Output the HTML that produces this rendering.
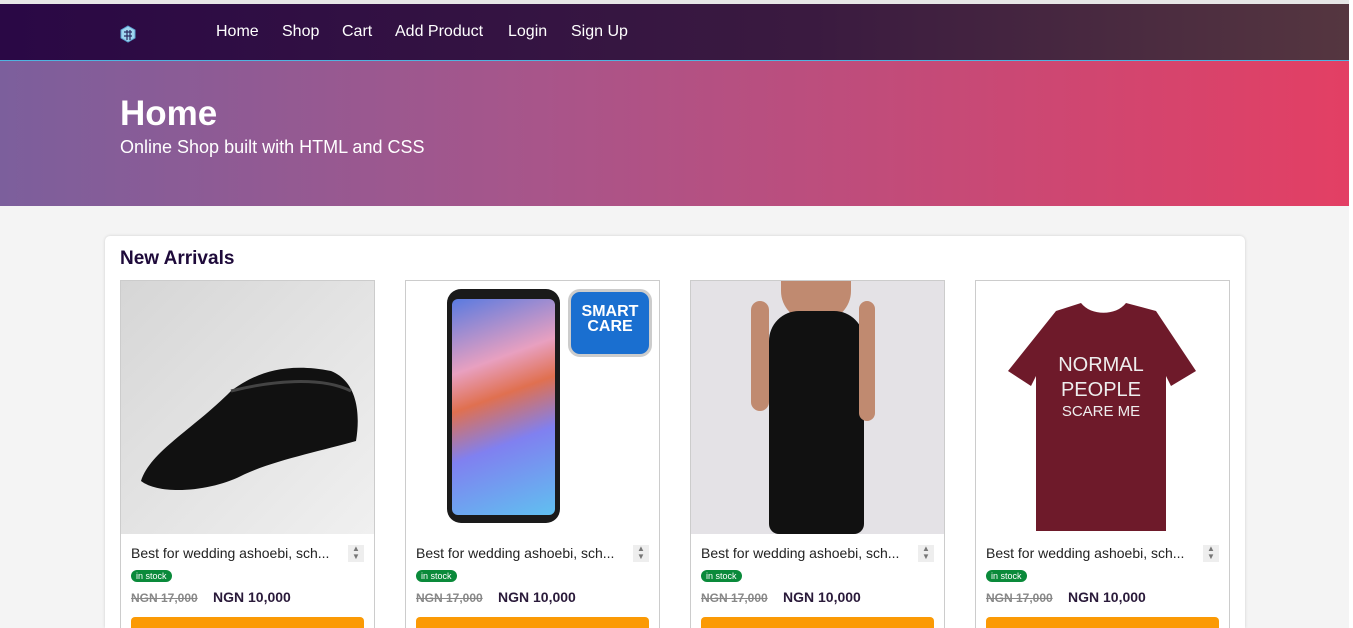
<!DOCTYPE html>
<html style="overflow:hidden;height:628px"><head><style>
*{margin:0;padding:0;box-sizing:border-box}
body{width:1353px;height:628px;overflow:hidden;background:#f4f4f4;font-family:"Liberation Sans",sans-serif;position:relative}
.top{position:absolute;left:0;top:0;width:1349px;height:4px;background:#e6e6e6}
nav{position:absolute;left:0;top:4px;width:1349px;height:57px;background:linear-gradient(90deg,#2a0845,#3a1a40 60%,#553640);border-bottom:1px solid #4fb4e0}
nav a{position:absolute;top:19px;color:#fff;font-size:16px;text-decoration:none}
.hero{position:absolute;left:0;top:61px;width:1349px;height:145px;background:linear-gradient(90deg,#7c5f9c,#a8558a 40%,#e33f64)}
.hero h1{position:absolute;left:120px;top:33px;color:#fff;font-size:35px;font-weight:bold}
.hero p{position:absolute;left:120px;top:76px;color:#fff;font-size:18px}
.sb{position:absolute;right:0;top:0;width:4px;height:628px;background:#fff}
.box{position:absolute;left:105px;top:236px;width:1140px;height:392px;background:#fff;border-radius:5px 5px 0 0;box-shadow:0 0 3px rgba(0,0,0,.15)}
.box h2{position:absolute;left:15px;top:12px;font-size:19px;color:#1e0a3a}
.card{position:absolute;top:280px;width:255px;height:348px;border:1px solid #ccc;border-bottom:none;background:#fff;overflow:hidden}
.img{position:absolute;left:0;top:0;width:253px;height:253px;overflow:hidden}
.t{position:absolute;left:10px;top:264px;font-size:14px;color:#222}
.sp{position:absolute;left:227px;top:264px;width:16px;height:17px;background:#eee;font-size:8px;color:#777;text-align:center;line-height:8px}
.st{position:absolute;left:10px;top:289px;background:#0a8a3a;color:#fff;font-size:9px;padding:1px 5px;border-radius:7px}
.o{position:absolute;left:10px;top:310px;font-size:12px;color:#888;text-decoration:line-through;font-weight:bold}
.n{position:absolute;left:92px;top:308px;font-size:14px;font-weight:bold;color:#2a1a3a}
.btn{position:absolute;left:10px;top:336px;width:233px;height:30px;background:#fb9a05;border-radius:4px}
</style></head><body>
<div class="top"></div>
<nav>
<svg style="position:absolute;left:120px;top:21px" width="17" height="18" viewBox="0 0 17 18"><path d="M8 1L15 5V13L8 17L1 13V5Z" fill="#9fd6f0" stroke="#5aa0d0"/><path d="M4 7h8M4 11h8M7 5v10M10 5v10" stroke="#2a2a60" stroke-width="1.2"/></svg>
<a style="left:216px">Home</a><a style="left:282px">Shop</a><a style="left:342px">Cart</a><a style="left:395px">Add Product</a><a style="left:508px">Login</a><a style="left:571px">Sign Up</a>
</nav>
<div class="hero"><h1>Home</h1><p>Online Shop built with HTML and CSS</p></div>
<div class="box"><h2>New Arrivals</h2></div>

<div class="card" style="left:120px"><div class="img" style="background:linear-gradient(135deg,#d6d6d6,#f0f0f0)">
<svg width="253" height="253"><path d="M20 200 C30 170 70 150 110 110 C130 95 160 80 210 90 C235 100 240 130 235 160 C200 170 150 180 120 195 C90 210 40 215 20 200Z" fill="#111"/><path d="M110 110 C150 100 200 95 230 110" stroke="#444" stroke-width="3" fill="none"/></svg></div>
<div class="t">Best for wedding ashoebi, sch...</div><div class="sp">▲<br>▼</div><div class="st">in stock</div><div class="o">NGN 17,000</div><div class="n">NGN 10,000</div><div class="btn"></div></div>

<div class="card" style="left:405px"><div class="img" style="background:#fff">
<div style="position:absolute;left:41px;top:8px;width:113px;height:234px;background:#1a1a1a;border-radius:14px"></div>
<div style="position:absolute;left:46px;top:18px;width:103px;height:216px;border-radius:6px;background:linear-gradient(160deg,#5a7ae0,#e8a0c0 30%,#e07050 45%,#8080f0 65%,#60c0f0)"></div>
<div style="position:absolute;left:162px;top:8px;width:84px;height:68px;border-radius:12px;background:#1a6fd0;border:3px solid #ccc;color:#fff;font-weight:bold;font-size:16px;text-align:center;line-height:15px;padding-top:12px">SMART<br>CARE</div></div>
<div class="t">Best for wedding ashoebi, sch...</div><div class="sp">▲<br>▼</div><div class="st">in stock</div><div class="o">NGN 17,000</div><div class="n">NGN 10,000</div><div class="btn"></div></div>

<div class="card" style="left:690px"><div class="img" style="background:#e4e2e6">
<div style="position:absolute;left:90px;top:0;width:70px;height:40px;background:#c08a70;border-radius:0 0 30px 30px"></div>
<div style="position:absolute;left:78px;top:30px;width:95px;height:223px;background:#111;border-radius:30px 30px 10px 10px"></div>
<div style="position:absolute;left:60px;top:20px;width:18px;height:110px;background:#c08a70;border-radius:9px"></div>
<div style="position:absolute;left:168px;top:20px;width:16px;height:120px;background:#c08a70;border-radius:8px"></div></div>
<div class="t">Best for wedding ashoebi, sch...</div><div class="sp">▲<br>▼</div><div class="st">in stock</div><div class="o">NGN 17,000</div><div class="n">NGN 10,000</div><div class="btn"></div></div>

<div class="card" style="left:975px"><div class="img" style="background:#fff">
<svg width="253" height="253"><path d="M80 30 L105 22 C115 35 140 35 150 22 L180 30 L220 90 L195 105 L190 95 L190 250 L60 250 L60 95 L55 105 L32 90Z" fill="#6e1a2a"/><text x="125" y="90" fill="#eee" font-size="20" text-anchor="middle" font-family="Liberation Sans">NORMAL</text><text x="125" y="115" fill="#eee" font-size="20" text-anchor="middle" font-family="Liberation Sans">PEOPLE</text><text x="125" y="135" fill="#eee" font-size="15" text-anchor="middle" font-family="Liberation Sans">SCARE ME</text></svg></div>
<div class="t">Best for wedding ashoebi, sch...</div><div class="sp">▲<br>▼</div><div class="st">in stock</div><div class="o">NGN 17,000</div><div class="n">NGN 10,000</div><div class="btn"></div></div>
<div class="sb"></div>
</body></html>
